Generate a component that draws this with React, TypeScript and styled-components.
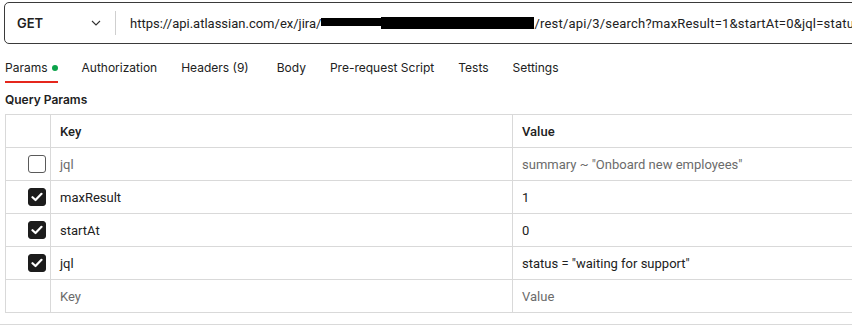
import React from "react";
import styled, { createGlobalStyle } from "styled-components";

const Global = createGlobalStyle`
  html, body { margin: 0; padding: 0; background: #fff; }
  body { overflow: hidden; width: 852px; height: 331px; font-family: Inter, "Noto Sans", sans-serif; color: #212121; }
  * { box-sizing: border-box; }
`;

const Page = styled.div`
  width: 852px;
  height: 331px;
  overflow: hidden;
  padding-top: 2px;
`;

const UrlBar = styled.div`
  margin-left: 4px;
  width: 870px;
  height: 42px;
  border: 1px solid #3a3a3a;
  border-radius: 5px;
  display: flex;
  align-items: center;
  overflow: hidden;
`;

const Method = styled.div`
  width: 110px;
  flex-shrink: 0;
  padding-left: 12px;
  padding-right: 14px;
  display: flex;
  align-items: center;
  justify-content: space-between;
  font-family: Inter, sans-serif;
  font-weight: 600;
  font-size: 13px;
  color: #212121;
`;

const Divider = styled.div`
  width: 1px;
  flex-shrink: 0;
  height: 24px;
  background: #cfcfcf;
`;

const Url = styled.div`
  padding-left: 14px;
  font-family: Roboto, "Liberation Sans", sans-serif;
  font-size: 13px;
  color: #212121;
  white-space: nowrap;
  display: flex;
  align-items: center;
  overflow: hidden;
`;

const Redact = styled.span`
  display: inline-flex;
  align-items: center;
  width: 213px;
  height: 14px;
  flex-shrink: 0;
`;

const RedactThin = styled.span`
  width: 60px;
  height: 8px;
  background: #000;
  margin-top: -2px;
`;

const RedactThick = styled.span`
  flex: 1;
  height: 12px;
  background: #000;
`;

const UrlTail = styled.span`
  letter-spacing: 0.2px;
`;

const Tabs = styled.div`
  display: flex;
  margin-left: 5px;
  margin-top: 12px;
  height: 26px;
`;

const Tab = styled.div<{ $active?: boolean; $mr: number }>`
  display: flex;
  align-items: flex-start;
  gap: 4px;
  margin-right: ${(p) => p.$mr}px;
  font-family: Inter, sans-serif;
  font-size: 12px;
  color: #212121;
  height: 27px;
  border-bottom: 2px solid ${(p) => (p.$active ? "#e5261c" : "transparent")};
  padding-top: 4px;
`;

const Dot = styled.span`
  width: 6px;
  height: 6px;
  border-radius: 50%;
  background: #0ca34a;
  margin-top: 5px;
`;

const SectionTitle = styled.div`
  margin: 9px 0 0 5px;
  font-family: Inter, sans-serif;
  font-weight: 600;
  font-size: 12px;
  color: #212121;
  height: 17px;
  line-height: 17px;
`;

const Table = styled.div`
  margin: 6px 0 0 5px;
  width: 900px;
  border: 1px solid #d9d9d9;
`;

const Row = styled.div`
  display: grid;
  grid-template-columns: 44px 462px 1fr;
  height: 33px;
  border-top: 1px solid #d9d9d9;
  &:first-child { border-top: none; height: 32px; }
`;

const Cell = styled.div<{ $head?: boolean; $muted?: boolean }>`
  display: flex;
  align-items: center;
  padding-left: 9px;
  border-left: 1px solid #d9d9d9;
  font-family: Roboto, "Liberation Sans", sans-serif;
  font-size: 13px;
  font-weight: ${(p) => (p.$head ? 500 : 400)};
  color: ${(p) => (p.$muted ? "#6b6b6b" : "#212121")};
  &:first-child { border-left: none; justify-content: flex-end; padding-left: 0; padding-right: 4px; }
`;

const Box = styled.div<{ $checked?: boolean }>`
  width: 18px;
  height: 18px;
  border-radius: 3px;
  border: 1px solid ${(p) => (p.$checked ? "#1c1c1c" : "#5a5a5a")};
  background: ${(p) => (p.$checked ? "#1c1c1c" : "#fff")};
  display: flex;
  align-items: center;
  justify-content: center;
`;

const BottomLine = styled.div`
  margin-top: 11px;
  height: 1px;
  background: #d9d9d9;
`;

const Check = () => (
  <svg width="12" height="10" viewBox="0 0 12 10">
    <path d="M1.5 5.2 L4.5 8 L10.5 1.8" stroke="#fff" strokeWidth="2.2" fill="none" strokeLinecap="round" strokeLinejoin="round" />
  </svg>
);

const Chevron = () => (
  <svg width="10" height="6" viewBox="0 0 10 6">
    <path d="M1 1 L5 5 L9 1" stroke="#333" strokeWidth="1.1" fill="none" />
  </svg>
);

const rows = [
  { on: false, k: "jql", v: 'summary ~ "Onboard new employees"' },
  { on: true, k: "maxResult", v: "1" },
  { on: true, k: "startAt", v: "0" },
  { on: true, k: "jql", v: 'status = "waiting for support"' },
];

export default function App() {
  return (
    <Page>
      <Global />
      <UrlBar>
        <Method>
          <span>GET</span>
          <Chevron />
        </Method>
        <Divider />
        <Url>
          https://api.atlassian.com/ex/jira/
          <Redact>
            <RedactThin />
            <RedactThick />
          </Redact>
          <UrlTail>/rest/api/3/search?maxResult=1&amp;startAt=0&amp;jql=status</UrlTail>
        </Url>
      </UrlBar>
      <Tabs>
        <Tab $active $mr={24}>
          Params <Dot />
        </Tab>
        <Tab $mr={24}>Authorization</Tab>
        <Tab $mr={28}>Headers (9)</Tab>
        <Tab $mr={24}>Body</Tab>
        <Tab $mr={24}>Pre-request Script</Tab>
        <Tab $mr={24}>Tests</Tab>
        <Tab $mr={24}>Settings</Tab>
      </Tabs>
      <SectionTitle>Query Params</SectionTitle>
      <Table>
        <Row>
          <Cell />
          <Cell $head>Key</Cell>
          <Cell $head>Value</Cell>
        </Row>
        {rows.map((r, i) => (
          <Row key={i}>
            <Cell>
              <Box $checked={r.on}>{r.on && <Check />}</Box>
            </Cell>
            <Cell $muted={!r.on}>{r.k}</Cell>
            <Cell $muted={!r.on}>{r.v}</Cell>
          </Row>
        ))}
        <Row>
          <Cell />
          <Cell $muted>Key</Cell>
          <Cell $muted>Value</Cell>
        </Row>
      </Table>
      <BottomLine />
    </Page>
  );
}
